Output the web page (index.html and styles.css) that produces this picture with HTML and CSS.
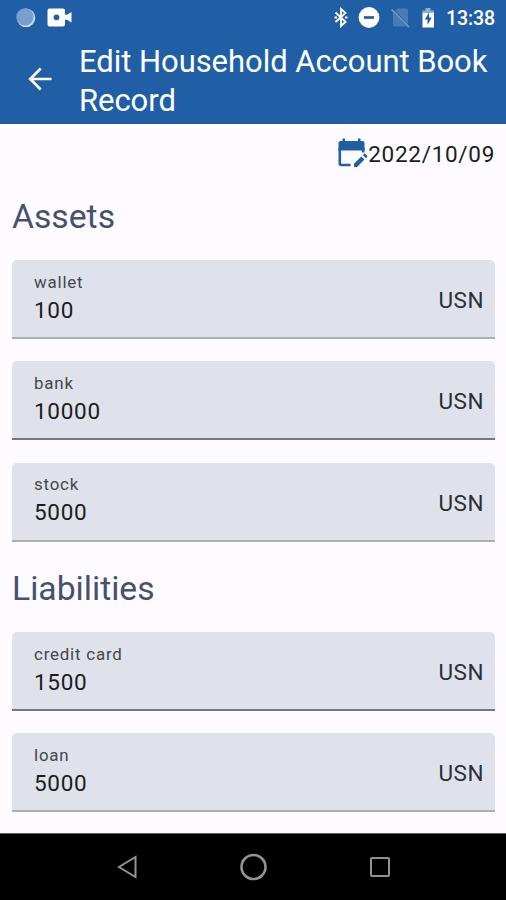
FILE: index.html
```html
<!DOCTYPE html>
<html lang="en">
<head>
<meta charset="utf-8">
<title>Edit Household Account Book Record</title>
<link rel="stylesheet" href="styles.css">
</head>
<body>
<div class="app">
  <header class="top">
    <div class="status">
      <svg class="status-left" width="62" height="24" viewBox="0 0 62 24">
        <circle cx="16" cy="11.800" r="9.300" fill="#c7dbee"/>
        <circle cx="15" cy="10.800" r="8.600" fill="#789fcd"/>
        <path d="M39.500 2.500h13.500a2 2 0 0 1 2 2v4.200h2l4.500-2.700v10.500L57 13.800h-2v4.700a2 2 0 0 1-2 2H39.500a2 2 0 0 1-2-2V4.500a2 2 0 0 1 2-2z" fill="#fff"/>
        <circle cx="46.500" cy="11.300" r="2.900" fill="#205fa6"/>
      </svg>
      <div class="status-right">
        <svg width="108" height="24" viewBox="0 0 108 24">
          <path d="M2.500 6.500 12.500 15.800 8 20V3l4.500 4L2.500 16" fill="none" stroke="#fff" stroke-width="1.900"/>
          <path d="M1.500 11.400H4M12 11.400h2.500" stroke="#fff" stroke-width="2"/>
          <circle cx="36" cy="11.500" r="10.400" fill="#fff"/>
          <path d="M31 11.500h10" stroke="#205fa6" stroke-width="2.700"/>
          <path d="M65 2.500h8a2 2 0 0 1 2 2V18L62 4.800zM60 6.500 74 20.500H62a2 2 0 0 1-2-2z" fill="#477ab6"/>
          <path d="M58.500 3.500 76 21" stroke="#7fa3cf" stroke-width="1.500"/>
          <path d="M92.500 2h5v2.500H101V9H89.500V4.500h3z" fill="#8fb0d5"/>
          <path d="M89.500 7H101V21.500H89.500z" fill="#fff"/>
          <path d="M96 6.500v5h2.700l-4.200 7.500v-5.500h-2.700z" fill="#205fa6"/>
        </svg>
        <span class="clock">13:38</span>
      </div>
    </div>
    <div class="bar">
      <svg class="back" width="28" height="26" viewBox="0 0 28 26" fill="none" stroke="#fff" stroke-width="2.600"><path d="M25.500 13H4M14.700 2.500 4.200 13l10.500 10.500"/></svg>
      <h1>Edit Household Account Book Record</h1>
    </div>
  </header>
  <main>
    <div class="date">
      <svg width="30" height="32" viewBox="0 0 30 32">
        <path d="M2.500 3h22a2 2 0 0 1 2 2V12.500h-26V5a2 2 0 0 1 2-2zM4.500 .5h2.500v4H4.500zM20 .5h2.500v4H20z" fill="#205fa6"/>
        <path d="M1.800 10v15.500a1.500 1.500 0 0 0 1.500 1.500H12.500M25.200 10v4.500" fill="none" stroke="#205fa6" stroke-width="2.600"/>
        <path d="M16 29v-3.300l7.300-7.300 3.200 3.200-7.400 7.400zM24.800 17.100l1.200-1.200a1 1 0 0 1 1.400 0l1.700 1.700a1 1 0 0 1 0 1.400L28 20.300z" fill="#205fa6"/>
      </svg>
      <span>2022/10/09</span>
    </div>
    <h2 class="assets-title">Assets</h2>
    <div class="fields">
      <div class="field soft"><div class="entry"><label>wallet</label><span>100</span></div><span class="unit">USN</span></div>
      <div class="field"><div class="entry"><label>bank</label><span>10000</span></div><span class="unit">USN</span></div>
      <div class="field soft"><div class="entry"><label>stock</label><span>5000</span></div><span class="unit">USN</span></div>
    </div>
    <h2 class="liabilities-title">Liabilities</h2>
    <div class="fields lower">
      <div class="field"><div class="entry"><label>credit card</label><span>1500</span></div><span class="unit">USN</span></div>
      <div class="field soft"><div class="entry"><label>loan</label><span>5000</span></div><span class="unit">USN</span></div>
    </div>
  </main>
  <nav>
    <svg width="28" height="28" viewBox="0 0 28 28"><path d="M22.500 4v20L6 14z"/></svg>
    <svg width="28" height="28" viewBox="0 0 28 28"><circle cx="14.500" cy="14" r="12" stroke-width="2.600"/></svg>
    <svg width="28" height="28" viewBox="0 0 28 28"><rect x="5" y="5" width="18" height="18" rx="1"/></svg>
  </nav>
</div>
</body>
</html>
```

FILE: styles.css
```css
* { box-sizing: border-box; }
body {
  margin: 0;
  font-family: Roboto, "Liberation Sans", sans-serif;
  background: #fdfbff;
  color: #1a1c20;
}
.app {
  height: 900px;
  display: flex;
  flex-direction: column;
  overflow: hidden;
}
.top {
  height: 124px;
  background: #205fa6;
  color: #fff;
}
.status {
  display: flex;
  justify-content: space-between;
  height: 41px;
  padding: 6px 11px 0 10px;
}
.status-right {
  display: flex;
  align-items: flex-start;
  gap: 5px;
}
.clock {
  font-size: 19.500px;
  line-height: 25px;
  font-weight: 500;
  letter-spacing: -0.100px;
}
.bar {
  display: flex;
  align-items: center;
  height: 79px;
  padding-left: 26px;
}
.back { flex: none; margin-top: -3px; }
h1 {
  margin: 0 0 0 25px;
  width: 420px;
  font-size: 31px;
  line-height: 39px;
  font-weight: 400;
  letter-spacing: -0.050px;
}
main {
  height: 709px;
  padding: 0 11px 0 12px;
}
.date {
  display: flex;
  justify-content: flex-end;
  align-items: center;
  height: 59px;
  font-size: 22.500px;
  letter-spacing: 0.700px;
}
h2 {
  margin: 0;
  font-size: 33.700px;
  line-height: 40px;
  font-weight: 400;
  color: #46516d;
}
.assets-title { padding: 14px 0 23px; }
.liabilities-title { padding: 27px 0 23px; }
.fields {
  display: grid;
  gap: 22.300px;
}
.field {
  display: flex;
  justify-content: space-between;
  align-items: center;
  height: 79px;
  padding: 0 11px 0 22px;
  background: #dfe2eb;
  border-bottom: 2px solid #74777f;
  border-radius: 5px 5px 0 0;
}
.field.soft { border-color: #abaeb5; }
.entry {
  display: flex;
  flex-direction: column;
}
.lower .entry { padding-top: 2px; }
label {
  font-size: 16.900px;
  line-height: 22px;
  letter-spacing: 0.800px;
  color: #44474e;
}
.entry span {
  font-size: 22.500px;
  line-height: 34px;
  letter-spacing: 0.700px;
}
.unit {
  padding-top: 3px;
  font-size: 22.500px;
  letter-spacing: 0.500px;
  color: #2c2f38;
}
nav {
  flex: 1;
  display: grid;
  grid-template-columns: repeat(3, 126.500px);
  justify-content: center;
  justify-items: center;
  align-items: center;
  background: #000;
  border-top: 1px solid #606060;
}
nav svg {
  fill: none;
  stroke: #929292;
  stroke-width: 2;
}
```
